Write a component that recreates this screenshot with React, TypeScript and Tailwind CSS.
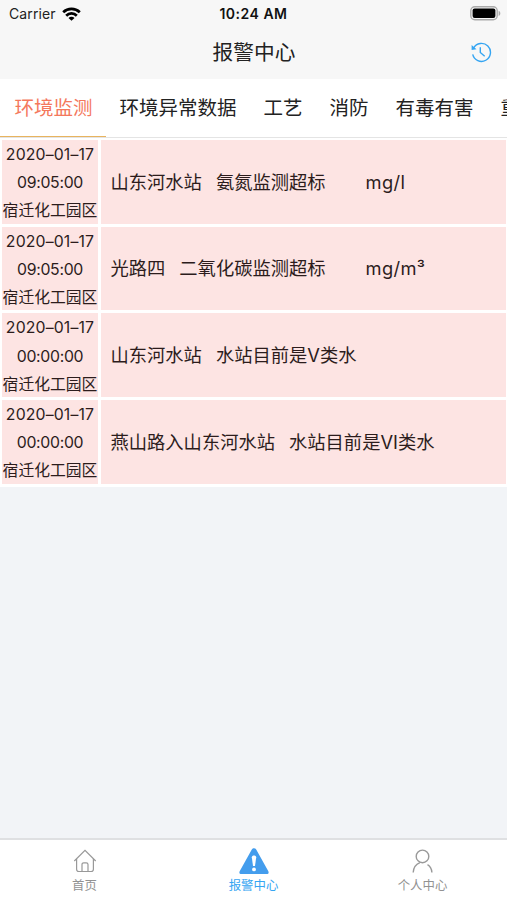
type Alarm = {
  date: string;
  time: string;
  area: string;
  station: string;
  message: string;
  unit?: string;
};

const tabs = ["环境异常数据", "工艺", "消防", "有毒有害", "重"];

const alarms: Alarm[] = [
  { date: "2020–01–17", time: "09:05:00", area: "宿迁化工园区", station: "山东河水站", message: "氨氮监测超标", unit: "mg/l" },
  { date: "2020–01–17", time: "09:05:00", area: "宿迁化工园区", station: "光路四", message: "二氧化碳监测超标", unit: "mg/m³" },
  { date: "2020–01–17", time: "00:00:00", area: "宿迁化工园区", station: "山东河水站", message: "水站目前是V类水" },
  { date: "2020–01–17", time: "00:00:00", area: "宿迁化工园区", station: "燕山路入山东河水站", message: "水站目前是VI类水" },
];

function StatusBar() {
  return (
    <div className="grid h-[27px] grid-cols-3 items-center pl-[9px] pr-[6px] text-[14px] text-[#222]">
      <div className="flex items-center gap-[6px]">
        <span className="tracking-[0.1px]">Carrier</span>
        <svg width="19" height="14" viewBox="0 0 19 14" fill="none" stroke="#000" strokeWidth="2.7">
          <path d="M1.2 5.2a11.9 11.9 0 0 1 16.6 0" />
          <path d="M4.2 8.7a7.4 7.4 0 0 1 10.6 0" />
          <path d="M9.5 13.8 6.5 10.9a4.2 4.2 0 0 1 6 0z" fill="#000" stroke="none" />
        </svg>
      </div>
      <span className="-ml-[3px] whitespace-nowrap text-center text-[14px] font-semibold tracking-[0.5px] text-[#111]">10:24 AM</span>
      <svg className="justify-self-end" width="31" height="15" viewBox="0 0 31 15">
        <rect x="0.8" y="0.8" width="26.4" height="12.9" rx="4" fill="#f7f7f7" stroke="#aaa" strokeWidth="1.4" />
        <rect x="2.6" y="2.5" width="22.8" height="9.5" rx="2" fill="#000" />
        <path d="M28.6 4.7c2.3.8 2.3 4.4 0 5.2z" fill="#aaa" />
      </svg>
    </div>
  );
}

function HistoryIcon() {
  return (
    <svg className="-mt-[2px]" width="21" height="21" viewBox="0 0 21 21" fill="none" stroke="#35a5f2" strokeWidth="1.4">
      <path d="M2.6 6a9 9 0 1 1-.9 6.4" />
      <path d="M9.3 5.2v5.2l4.4 3.9" />
      <path d="M.6 2.9v5l4.9-.7z" fill="#35a5f2" stroke="none" />
    </svg>
  );
}

function AlarmRow({ alarm }: { alarm: Alarm }) {
  return (
    <div className="flex h-[86.7px] gap-[3px] pb-[3px] pl-[2px] pr-px text-[#2c1c1c]">
      <div className="flex w-[96px] shrink-0 flex-col items-center whitespace-nowrap bg-[#fde4e3] pt-px text-[15.8px] leading-[28.2px]">
        <span className="tracking-[0.15px]">{alarm.date}</span>
        <span className="tracking-[-0.3px]">{alarm.time}</span>
        <span>{alarm.area}</span>
      </div>
      <div className="flex flex-1 items-center whitespace-nowrap bg-[#fde4e3] pl-[9.5px] pt-px text-[18.3px]">
        <span>{alarm.station}</span>
        <span className="ml-[14px]">{alarm.message}</span>
        {alarm.unit && <span className="ml-[40px] tracking-[0.35px]">{alarm.unit}</span>}
      </div>
    </div>
  );
}

export default function App() {
  return (
    <div className="flex h-[900px] w-[507px] flex-col overflow-hidden bg-[#f2f4f7] font-['Inter','Noto_Sans_CJK_SC',sans-serif]">
      <header className="h-[79px] shrink-0 bg-[#f7f7f7]">
        <StatusBar />
        <div className="grid h-[52px] grid-cols-[1fr_auto_1fr] items-center pr-[15px]">
          <span />
          <h1 className="pl-[16px] text-[20.7px] text-[#222]">报警中心</h1>
          <button className="justify-self-end">
            <HistoryIcon />
          </button>
        </div>
      </header>

      <nav className="flex h-[59px] shrink-0 overflow-hidden whitespace-nowrap border-b border-[#e4e4e4] bg-white text-[19.5px] text-[#222]">
        <button className="h-[59px] shrink-0 border-b-2 border-[#e8b45f] pl-[14.5px] pr-[13.5px] pt-[3px] text-[#f4785c]">环境监测</button>
        {tabs.map((tab) => (
          <button key={tab} className="shrink-0 px-[13.5px] pt-[2px]">
            {tab}
          </button>
        ))}
      </nav>

      <main className="flex-1">
        <div className="bg-white pt-[2px]">
          {alarms.map((alarm, i) => (
            <AlarmRow key={i} alarm={alarm} />
          ))}
        </div>
      </main>

      <footer className="grid h-[62px] shrink-0 grid-cols-3 border-t-2 border-[#dfe0e2] bg-white text-[12.4px] leading-[18px] text-[#929292]">
        <div className="flex flex-col items-center gap-[3px] pt-[8px]">
          <svg width="24" height="26" viewBox="0 0 24 26" fill="none" stroke="#999" strokeWidth="1.2">
            <path d="M1.3 13 12 2.3 22.7 13" />
            <path d="M3.6 11v10.3c0 1.4.8 2.2 2.2 2.2h12.4c1.4 0 2.2-.8 2.2-2.2V11" />
            <path d="M9 23.5v-6.9c0-1.2.7-1.8 1.7-1.8h2.6c1 0 1.7.6 1.7 1.8v6.9" />
          </svg>
          <span>首页</span>
        </div>
        <div className="flex flex-col items-center gap-[3px] pt-[8px] text-[#35a5f2]">
          <svg width="30" height="26" viewBox="0 0 30 26">
            <path d="M12.8 1.5c1-1.8 3.4-1.8 4.4 0l12 21.6c1 1.6.2 2.9-1.6 2.9H2.4C.6 26-.2 24.7.8 23.1z" fill="#449ded" />
            <path d="M12.8 9.2c0-2.3 4.4-2.3 4.4 0L16 18h-2z" fill="#fff" />
            <circle cx="15" cy="21.4" r="1.9" fill="#fff" />
          </svg>
          <span>报警中心</span>
        </div>
        <div className="flex flex-col items-center gap-[3px] pt-[8px]">
          <svg width="24" height="26" viewBox="0 0 24 26" fill="none" stroke="#999" strokeWidth="1.4">
            <circle cx="11.5" cy="8.4" r="6.3" />
            <path d="M2.2 24.5c.2-4.8 2.8-8.3 6.7-9.9M16.5 16.6c2.6 1.5 4.2 4.3 4.4 7.9" />
          </svg>
          <span>个人中心</span>
        </div>
      </footer>
    </div>
  );
}
